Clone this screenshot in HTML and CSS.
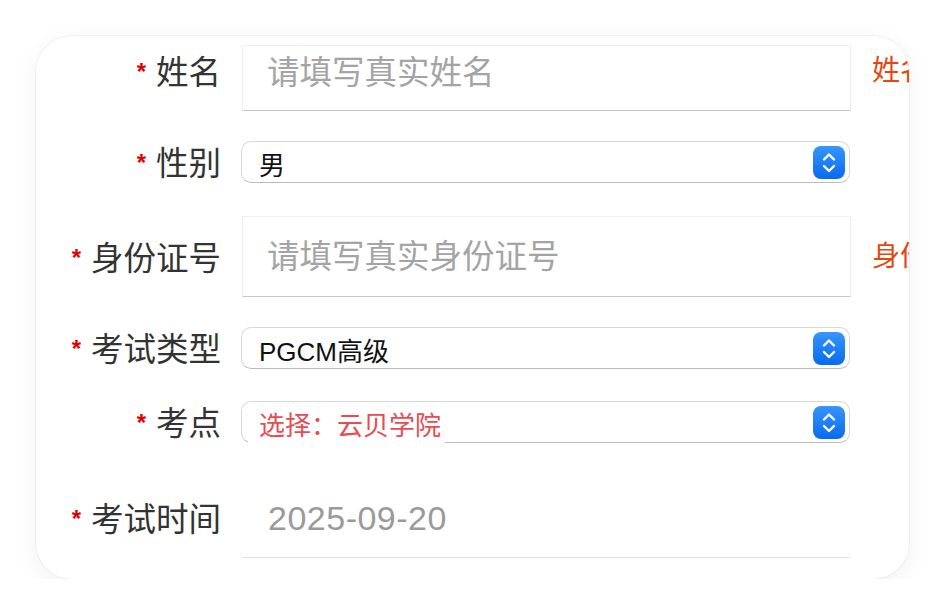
FILE: index.html
```html
<!DOCTYPE html>
<html lang="zh-CN">
<head>
    <meta charset="UTF-8">
    <meta name="viewport" content="width=device-width, initial-scale=1.0">
    <title>报名信息</title>
    <link rel="stylesheet" href="styles.css">
</head>
<body>
    <div class="window">
        <form class="form">
            <div class="row row-name">
                <label class="label" for="name"><span class="req">*</span>姓名</label>
                <input class="input input-first" id="name" type="text" placeholder="请填写真实姓名">
                <span class="error">姓名不能为空</span>
            </div>
            <div class="row row-sex">
                <label class="label"><span class="req">*</span>性别</label>
                <div class="select">
                    <span class="select-value">男</span>
                    <span class="select-arrow">
                        <svg width="32" height="33" viewBox="0 0 32 33"><path d="M11 13.5 16 8.5 21 13.5M11 20 16 25 21 20" fill="none" stroke="#fff" stroke-width="2.4" stroke-linecap="round" stroke-linejoin="round"/></svg>
                    </span>
                </div>
            </div>
            <div class="row row-id">
                <label class="label" for="idcard"><span class="req">*</span>身份证号</label>
                <input class="input" id="idcard" type="text" placeholder="请填写真实身份证号">
                <span class="error">身份证号不能为空</span>
            </div>
            <div class="row row-type">
                <label class="label"><span class="req">*</span>考试类型</label>
                <div class="select">
                    <span class="select-value">PGCM高级</span>
                    <span class="select-arrow">
                        <svg width="32" height="33" viewBox="0 0 32 33"><path d="M11 13.5 16 8.5 21 13.5M11 20 16 25 21 20" fill="none" stroke="#fff" stroke-width="2.4" stroke-linecap="round" stroke-linejoin="round"/></svg>
                    </span>
                </div>
            </div>
            <div class="row row-site">
                <label class="label"><span class="req">*</span>考点</label>
                <div class="select">
                    <span class="select-value hint">选择：云贝学院</span>
                    <span class="select-arrow">
                        <svg width="32" height="33" viewBox="0 0 32 33"><path d="M11 13.5 16 8.5 21 13.5M11 20 16 25 21 20" fill="none" stroke="#fff" stroke-width="2.4" stroke-linecap="round" stroke-linejoin="round"/></svg>
                    </span>
                </div>
            </div>
            <div class="row row-date">
                <label class="label" for="date"><span class="req">*</span>考试时间</label>
                <input class="input input-date" id="date" type="text" value="2025-09-20" readonly>
            </div>
        </form>
    </div>
</body>
</html>
```

FILE: styles.css
```css
body {
    margin: 0;
    background: #fff;
    font-family: "Liberation Sans", "Noto Sans CJK SC", sans-serif;
}
.window {
    width: 873px;
    height: 543px;
    margin: 36px 0 0 36px;
    background: #fff;
    border-radius: 36px;
    overflow: hidden;
    box-shadow: 0 0 0 1px rgba(0, 0, 0, 0.04), 0 6px 26px rgba(0, 0, 0, 0.06);
}
.form {
    margin: 0;
    padding-top: 9px;
}
.row {
    display: grid;
    grid-template-columns: 183px 609px max-content;
    column-gap: 22px;
    align-items: center;
}
.row-sex { margin-top: 30px; }
.row-id { margin-top: 33px; }
.row-type { margin-top: 30px; }
.row-site { margin-top: 32px; }
.row-date { margin-top: 34px; }
.label {
    margin-right: -2px;
    padding-top: 5px;
    text-align: right;
    font-size: 32.5px;
    line-height: 1;
    color: #333;
    white-space: nowrap;
}
.req {
    display: inline-block;
    margin-right: 10px;
    font-size: 24px;
    font-weight: bold;
    color: #e00000;
    vertical-align: 4px;
}
.input {
    box-sizing: border-box;
    width: 609px;
    height: 81px;
    margin: 0 0 0 1px;
    padding: 2px 0 0 24px;
    border: 1px solid #efefef;
    border-bottom-color: #c6c6c6;
    background: #fff;
    font: inherit;
    font-size: 32.5px;
    color: #333;
    outline: none;
}
.input::placeholder {
    color: #a4a4a4;
}
.input-first {
    height: 66px;
    padding: 0 0 10px 24px;
}
.row-name .label,
.row-name .error {
    margin-bottom: 14px;
}
.input-date {
    padding-left: 25px;
    border-color: transparent;
    border-bottom-color: #dedede;
    font-size: 34px;
    color: #9a9a9a;
    letter-spacing: 0.5px;
}
.error {
    font-size: 28px;
    line-height: 1;
    color: #e4470f;
    white-space: nowrap;
}
.select {
    display: flex;
    align-items: stretch;
    box-sizing: border-box;
    height: 42px;
    padding: 0 4px 0 6px;
    border: 1px solid #d8d8d8;
    border-bottom-color: #bcbcbc;
    border-radius: 10px;
    background: #fff;
}
.select-value {
    display: flex;
    align-items: center;
    margin-bottom: -1px;
    padding: 2px 4px 0 11px;
    font-size: 26px;
    color: #111;
}
.select-value.hint {
    color: #eb4a50;
    background: #fff;
}
.select-arrow {
    display: flex;
    align-self: center;
    width: 32px;
    height: 33px;
    margin-left: auto;
    border-radius: 8px;
    background: linear-gradient(#3795fc, #086bf0);
}
```
